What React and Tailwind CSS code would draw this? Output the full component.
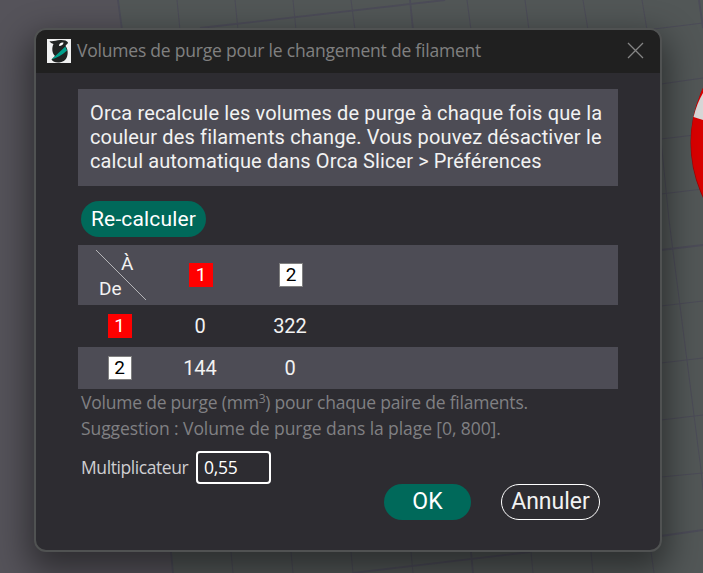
import React from "react";

const ui = "font-['Open_Sans','Noto_Sans',sans-serif]";

function Swatch({ n, red }) {
  return (
    <span className={`flex h-6 w-6 items-center justify-center pb-px text-[19px] leading-none ${red ? "bg-[#ff0000] text-white" : "border border-[#808080] bg-white text-black"}`}>
      {n}
    </span>
  );
}

function Row({ head, cells, className = "" }) {
  return (
    <div className={`grid h-[42px] grid-cols-[83px_78px_102px_1fr] items-center ${className}`}>
      <div className="flex justify-center">{head}</div>
      {cells.map((c, i) => (
        <div key={i} className="text-center">{c}</div>
      ))}
    </div>
  );
}

function Backdrop() {
  return (
    <svg className="absolute inset-0" width="703" height="573" fill="none">
      <rect width="703" height="573" fill="#55535a" />
      <path d="M118 0L122 30L171 552L173 573H703V0Z" fill="#525757" />
      <g stroke="#4c4c58" strokeWidth="1">
        <path d="M177 0L180 30M235 0L238 30M293 0L296 30M351 0L355 30M467 0L471 30M525 0L529 30M583 0L588 30M642 0L647 30" />
        <path d="M654 29L703 23M661 84L703 78M661 139L703 134M661 194L703 189M661 306L703 301M661 363L703 358M661 420L703 415M661 477L703 473" />
        <path d="M661 140L669 220L701 470L703 490M231 552L233 573M291 552L293 573M351 552L353 573M411 552L413 573M531 552L533 573M591 552L593 573M651 552L654 573" />
      </g>
      <g stroke="#4c4c58" strokeWidth="1.8">
        <path d="M118 0L122 30M200 28L445 0M410 0L413 30M699 0L703 28M661 250L703 245M661 536L703 530M353 573L530 552M171 552L173 573M471 552L473 573" />
      </g>
      <circle cx="817.5" cy="143" r="127" fill="#a00000" />
      <circle cx="818" cy="142" r="127" fill="#d90000" />
      <path d="M693.5 117Q697 103 703 93V120Z" fill="#d8d8d8" />
    </svg>
  );
}

export default function App() {
  return (
    <div className={`relative h-[573px] w-[703px] overflow-hidden pl-[34px] pt-[28px] ${ui}`}>
      <Backdrop />
      <div className="relative h-[524px] w-[628px] overflow-hidden rounded-xl border-2 border-[#505252] bg-[#2d2c31] shadow-[0_14px_34px_6px_rgba(0,0,0,0.46)]">
        <header className="flex h-[43px] items-center bg-[#202020] pb-[2px] pl-[11px] pr-[16px]">
          <svg width="24" height="24" viewBox="0 0 24 24">
            <path d="M0 0H24V24H0Z" fill="#f0f1f1" />
            <path d="M2.5 2C6 3 9 1.200 13 1C17 .8 20 1.500 21 3.500C21 5 19 5.500 18.500 7C21 10 21.500 15 19.500 19C17.500 22.500 14 23.500 11 23.500C8 23.500 5.500 22.500 4.500 20.500L8 17C5 14 4.500 9 6.500 5C5 4.500 3 3.500 2.500 2Z" fill="#202322" />
            <path d="M4.500 20.500C9 16 14 12 18.300 7.500L20 11.500C15.500 16 10 18.500 4.500 20.500Z" fill="#00a08c" />
            <path d="M12 7C12 4.500 14 3 16.500 3.500C16.500 5.500 14.500 7 12 7Z" fill="#fff" />
          </svg>
          <h1 className="ml-[6px] whitespace-nowrap pb-px text-[17.5px] tracking-[-0.21px] text-[#808080]">Volumes de purge pour le changement de filament</h1>
          <svg className="ml-auto" width="17" height="17" viewBox="0 0 17 17" fill="none" stroke="#858585" strokeWidth="1.3">
            <path d="M1 1L16 16M16 1L1 16" />
          </svg>
        </header>
        <main className="px-[42px] pt-4 font-['Roboto','Liberation_Sans',sans-serif] text-[20px] leading-6 text-[#f2f2f2]">
          <div className="h-[97px] whitespace-nowrap bg-[#4d4c55] px-3 pt-[12px] tracking-[0.15px]">
            <p>Orca recalcule les volumes de purge à chaque fois que la</p>
            <p>couleur des filaments change. Vous pouvez désactiver le</p>
            <p className="tracking-[0.1px]">calcul automatique dans Orca Slicer &gt; Préférences</p>
          </div>
          <button className="ml-[3px] mt-[15px] flex h-9 w-[125px] items-center justify-center rounded-full bg-[#00695a] text-[21px] tracking-[0.15px] text-white">Re-calculer</button>
          <section className="mt-2">
            <div className="grid h-[60px] grid-cols-[83px_78px_102px_1fr] items-center bg-[#4d4c55]">
              <div className="relative h-full text-[19px] leading-5">
                <svg className="absolute left-[18px] top-[5px]" width="50" height="50" stroke="#b5b5b8">
                  <path d="M0 0L50 50" />
                </svg>
                <span className="absolute left-[43px] top-[9px]">À</span>
                <span className="absolute left-[21px] top-[34px]">De</span>
              </div>
              <div className="flex justify-center pl-[2px]"><Swatch n="1" red /></div>
              <div className="flex justify-center pl-[2px]"><Swatch n="2" /></div>
            </div>
            <Row head={<Swatch n="1" red />} cells={["0", "322"]} />
            <Row head={<Swatch n="2" />} cells={["144", "0"]} className="bg-[#4d4c55]" />
          </section>
          <div className={`ml-[3px] whitespace-nowrap text-[17.5px] leading-[26px] text-[#808083] ${ui}`}>
            <p className="tracking-[-0.22px]">Volume de purge (mm<sup className="top-[-6px] text-[12px]">3</sup>) pour chaque paire de filaments.</p>
            <p className="tracking-[-0.08px]">Suggestion : Volume de purge dans la plage [0, 800].</p>
          </div>
          <div className={`ml-[3px] mt-[10px] flex h-[33px] items-center text-[17.5px] text-[#cfcfd1] ${ui}`}>
            <label className="w-[115px] whitespace-nowrap pb-[2px] tracking-[-0.42px]">Multiplicateur</label>
            <div className="flex h-[33px] w-[75px] items-center rounded-sm border-2 border-white pb-[2px] pl-[6px] tracking-[-0.3px] text-white">0,55</div>
          </div>
          <footer className="flex justify-end gap-[30px] pr-[18px] text-[23px]">
            <button className="flex h-9 w-[87px] items-center justify-center rounded-full bg-[#00695a] text-white">OK</button>
            <button className="flex h-9 w-[99px] items-center justify-center rounded-full border border-white">Annuler</button>
          </footer>
        </main>
      </div>
    </div>
  );
}
